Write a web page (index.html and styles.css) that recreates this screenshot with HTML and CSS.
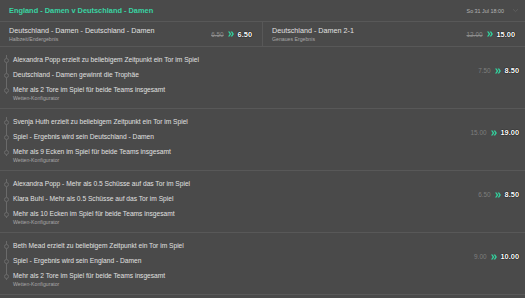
FILE: index.html
```html
<html>
<head>
    <title>Wettschein</title>
    <link rel="stylesheet" href="styles.css">
</head>
<body>
    <div class="event-header">
        <span class="event-title">England - Damen v Deutschland - Damen</span>
        <span class="event-meta">
            <span class="event-date">So 31 Jul 18:00</span>
            <svg class="toggle" width="7" height="5" viewBox="0 0 7 5"><path d="M1 1.2 L3.5 3.6 L6 1.2" fill="none" stroke="#5f5f5f" stroke-width="0.9"/></svg>
        </span>
    </div>

    <div class="row row-split">
        <div class="cell">
            <div class="selection">
                <div class="selection-name">Deutschland - Damen - Deutschland - Damen</div>
                <div class="market">Halbzeit/Endergebnis</div>
            </div>
            <div class="price"><s class="old">6.50</s><svg class="boost" width="6" height="6" viewBox="0 0 6 6"><path d="M0 0.5 L1.6 0.5 L3.3 3 L1.6 5.5 L0 5.5 L1.7 3 Z M2.6 0.5 L4.2 0.5 L5.9 3 L4.2 5.5 L2.6 5.5 L4.3 3 Z" fill="#33d19d"/></svg><b class="new">6.50</b></div>
        </div>
        <div class="cell">
            <div class="selection">
                <div class="selection-name">Deutschland - Damen 2-1</div>
                <div class="market">Genaues Ergebnis</div>
            </div>
            <div class="price"><s class="old">12.00</s><svg class="boost" width="6" height="6" viewBox="0 0 6 6"><path d="M0 0.5 L1.6 0.5 L3.3 3 L1.6 5.5 L0 5.5 L1.7 3 Z M2.6 0.5 L4.2 0.5 L5.9 3 L4.2 5.5 L2.6 5.5 L4.3 3 Z" fill="#33d19d"/></svg><b class="new">15.00</b></div>
        </div>
    </div>

    <div class="row row-builder">
        <div class="builder">
            <ul class="legs">
                <li>Alexandra Popp erzielt zu beliebigem Zeitpunkt ein Tor im Spiel</li>
                <li>Deutschland - Damen gewinnt die Trophäe</li>
                <li>Mehr als 2 Tore im Spiel für beide Teams insgesamt</li>
            </ul>
            <div class="market">Wetten-Konfigurator</div>
        </div>
        <div class="price"><span class="old">7.50</span><svg class="boost" width="6" height="6" viewBox="0 0 6 6"><path d="M0 0.5 L1.6 0.5 L3.3 3 L1.6 5.5 L0 5.5 L1.7 3 Z M2.6 0.5 L4.2 0.5 L5.9 3 L4.2 5.5 L2.6 5.5 L4.3 3 Z" fill="#33d19d"/></svg><b class="new">8.50</b></div>
    </div>

    <div class="row row-builder">
        <div class="builder">
            <ul class="legs">
                <li>Svenja Huth erzielt zu beliebigem Zeitpunkt ein Tor im Spiel</li>
                <li>Spiel - Ergebnis wird sein Deutschland - Damen</li>
                <li>Mehr als 9 Ecken im Spiel für beide Teams insgesamt</li>
            </ul>
            <div class="market">Wetten-Konfigurator</div>
        </div>
        <div class="price"><span class="old">15.00</span><svg class="boost" width="6" height="6" viewBox="0 0 6 6"><path d="M0 0.5 L1.6 0.5 L3.3 3 L1.6 5.5 L0 5.5 L1.7 3 Z M2.6 0.5 L4.2 0.5 L5.9 3 L4.2 5.5 L2.6 5.5 L4.3 3 Z" fill="#33d19d"/></svg><b class="new">19.00</b></div>
    </div>

    <div class="row row-builder">
        <div class="builder">
            <ul class="legs">
                <li>Alexandra Popp - Mehr als 0.5 Schüsse auf das Tor im Spiel</li>
                <li>Klara Buhl - Mehr als 0.5 Schüsse auf das Tor im Spiel</li>
                <li>Mehr als 10 Ecken im Spiel für beide Teams insgesamt</li>
            </ul>
            <div class="market">Wetten-Konfigurator</div>
        </div>
        <div class="price"><span class="old">6.50</span><svg class="boost" width="6" height="6" viewBox="0 0 6 6"><path d="M0 0.5 L1.6 0.5 L3.3 3 L1.6 5.5 L0 5.5 L1.7 3 Z M2.6 0.5 L4.2 0.5 L5.9 3 L4.2 5.5 L2.6 5.5 L4.3 3 Z" fill="#33d19d"/></svg><b class="new">8.50</b></div>
    </div>

    <div class="row row-builder">
        <div class="builder">
            <ul class="legs">
                <li>Beth Mead erzielt zu beliebigem Zeitpunkt ein Tor im Spiel</li>
                <li>Spiel - Ergebnis wird sein England - Damen</li>
                <li>Mehr als 2 Tore im Spiel für beide Teams insgesamt</li>
            </ul>
            <div class="market">Wetten-Konfigurator</div>
        </div>
        <div class="price"><span class="old">9.00</span><svg class="boost" width="6" height="6" viewBox="0 0 6 6"><path d="M0 0.5 L1.6 0.5 L3.3 3 L1.6 5.5 L0 5.5 L1.7 3 Z M2.6 0.5 L4.2 0.5 L5.9 3 L4.2 5.5 L2.6 5.5 L4.3 3 Z" fill="#33d19d"/></svg><b class="new">10.00</b></div>
    </div>
</body>
</html>
```

FILE: styles.css
```css
body {
    background-color: #4a4a4a;
    font-family: "Liberation Sans", Arial, sans-serif;
    color: #e2e2e2;
    margin: 0;
    padding: 0;
}

.event-header {
    display: flex;
    justify-content: space-between;
    align-items: center;
    height: 22px;
    padding: 0 6px 0 9px;
    border-bottom: 1px solid #585858;
    box-sizing: border-box;
}

.event-title {
    color: #39d3a2;
    font-weight: bold;
    font-size: 7.4px;
}

.event-meta {
    display: flex;
    align-items: center;
    gap: 8px;
}

.event-date {
    color: #b4b4b4;
    font-size: 5.4px;
}

.row {
    display: flex;
    border-bottom: 1px solid #585858;
}

.row-split {
    height: 25px;
    box-sizing: border-box;
}

.cell {
    flex: 1;
    display: flex;
    align-items: center;
    justify-content: space-between;
    padding: 0 10px 0 9px;
}

.cell + .cell {
    border-left: 1px solid #585858;
}

.selection-name {
    font-size: 7.2px;
    color: #e0e0e0;
}

.market {
    font-size: 5.2px;
    color: #a8a8a8;
    margin-top: 1px;
}

.price {
    display: flex;
    align-items: center;
    gap: 4px;
    font-size: 6.4px;
}

.old {
    color: #8c8c8c;
}

.boost {
    display: block;
}

.new {
    color: #fff;
    font-size: 7.4px;
    text-shadow: 0 0 1px #000, 0 0 1px #000;
}

.row-builder {
    height: 62px;
    box-sizing: border-box;
    align-items: flex-start;
    justify-content: space-between;
    padding: 8px 6px 0 6px;
}

.row-builder .price {
    margin-top: 11px;
}

.row-builder .old {
    color: #7e7e7e;
}

.legs {
    list-style: none;
    margin: 0;
    padding: 0;
    position: relative;
}

.legs::before {
    content: "";
    position: absolute;
    left: 0;
    top: 0;
    bottom: 6px;
    border-left: 1px solid #6a6a6a;
}

.legs li {
    position: relative;
    padding-left: 7px;
    height: 15px;
    line-height: 10px;
    font-size: 6.65px;
    color: #e0e0e0;
}

.legs li::before {
    content: "";
    position: absolute;
    left: -2px;
    top: 3px;
    width: 3px;
    height: 3px;
    border: 1px solid #6a6a6a;
    border-radius: 50%;
    background: #4a4a4a;
}

.builder .market {
    padding-left: 7px;
    margin-top: -5px;
}
```
